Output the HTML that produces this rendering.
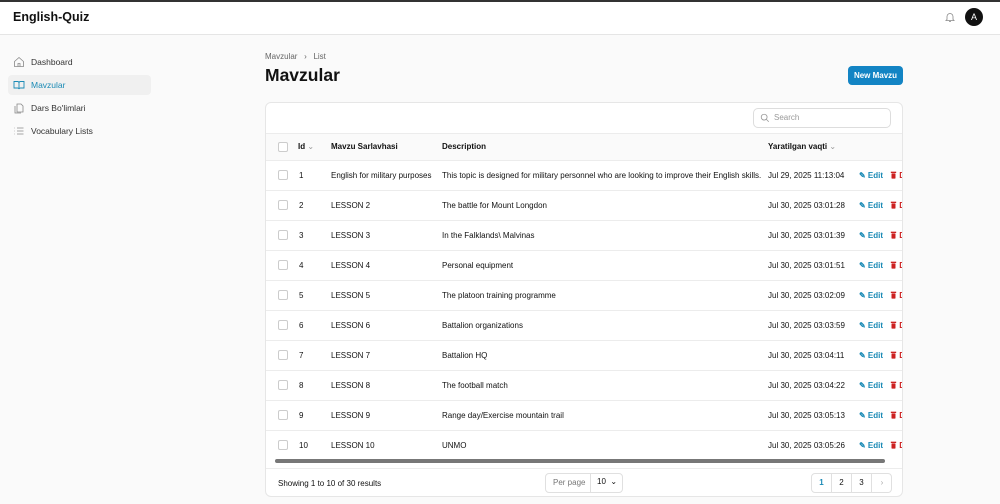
<!DOCTYPE html>
<html><head><meta charset="utf-8"><style>
*{box-sizing:border-box;margin:0;padding:0}
body{width:1000px;height:504px;overflow:hidden;font-family:"Liberation Sans",sans-serif;background:#fafafa;color:#111;position:relative}
.topline{position:absolute;left:0;top:0;width:1000px;height:2px;background:#333;z-index:5}
.hdr{position:absolute;top:0;left:0;right:0;height:35px;background:#fff;border-bottom:1px solid #e5e5e5}
.logo{position:absolute;left:13px;top:10px;font-weight:bold;font-size:12.5px}
.bell{position:absolute;left:944px;top:10px}
.av{position:absolute;left:965px;top:8px;width:18px;height:18px;border-radius:50%;background:#111;color:#fff;font-size:9px;text-align:center;line-height:18px}
.nav{position:absolute;left:8px;width:143px;height:20px;font-size:8.5px;color:#333;line-height:20px;padding-left:23px}
.nav svg{position:absolute;left:5px;top:4px}
.nav.act{background:#f0f0f0;border-radius:4px;color:#1a8ab5}
.bc{position:absolute;left:265px;top:52px;font-size:8px;color:#666}
h1{position:absolute;left:265px;top:65px;font-size:17.5px;font-weight:bold}
.btn{position:absolute;left:848px;top:66px;width:55px;height:19px;background:#1384c4;color:#fff;border-radius:4px;font-size:8px;font-weight:bold;text-align:center;line-height:19px}
.card{position:absolute;left:265px;top:102px;width:638px;height:395px;background:#fff;border:1px solid #e6e6e6;border-radius:6px;overflow:hidden}
.search{position:absolute;left:487px;top:5px;width:138px;height:20px;border:1px solid #ddd;border-radius:5px;font-size:8px;color:#999;line-height:18px;padding-left:20px}
.search svg{position:absolute;left:6px;top:4px}
.row{position:absolute;left:0;width:638px;height:30px;border-top:1px solid #ececec;font-size:8px;line-height:29px}
.row span{position:absolute;top:0;white-space:nowrap}
.th{background:#fafafa;height:27px;line-height:26px;font-weight:bold}
.cb{position:absolute;left:12px;top:9px;width:10px;height:10px;border:1px solid #ccc;border-radius:2px;background:#fff}
.th .cb{top:8px}
.ed{color:#1a8ab5;font-weight:bold}
.dl{color:#c22;font-weight:bold}
.dl svg{vertical-align:-1px}
.sb{position:absolute;left:9px;top:356px;width:610px;height:4px;background:#777;border-radius:2px}
.foot{position:absolute;left:0;top:365px;width:638px;height:30px;border-top:1px solid #ececec;font-size:8px}
.pp{position:absolute;left:279px;top:4px;width:78px;height:20px;border:1px solid #e0e0e0;border-radius:4px;line-height:18px;color:#777}
.pg{position:absolute;left:545px;top:4px;width:81px;height:20px;border:1px solid #e0e0e0;border-radius:4px;line-height:18px}
.pg span{position:absolute;top:0;width:20px;text-align:center;border-right:1px solid #e0e0e0}
</style></head><body>
<div class="topline"></div>
<div class="hdr"><div class="logo">English-Quiz</div>
<svg class="bell" width="12" height="14" viewBox="0 0 24 24" fill="none" stroke="#888" stroke-width="1.6"><path d="M6 17V11a6 6 0 0112 0v6l2 2H4zM10 21h4"/></svg>
<div class="av">A</div></div>
<div class="nav" style="top:52px"><svg width="12" height="12" viewBox="0 0 24 24" fill="none" stroke="#888" stroke-width="1.6"><path d="M3 11l9-8 9 8v10H3zM10 21v-6h4v6"/></svg>Dashboard</div>
<div class="nav act" style="top:75px"><svg width="12" height="12" viewBox="0 0 24 24" fill="none" stroke="#1a8ab5" stroke-width="1.8"><path d="M2 5h7a3 3 0 013 3v12a3 3 0 00-3-2H2zM22 5h-7a3 3 0 00-3 3v12a3 3 0 013-2h7z"/></svg>Mavzular</div>
<div class="nav" style="top:98px"><svg width="12" height="12" viewBox="0 0 24 24" fill="none" stroke="#888" stroke-width="1.6"><path d="M8 4h8l4 4v12H8zM4 8v14h12"/></svg>Dars Bo'limlari</div>
<div class="nav" style="top:121px"><svg width="12" height="12" viewBox="0 0 24 24" fill="none" stroke="#888" stroke-width="1.6"><path d="M8 6h13M8 12h13M8 18h13M3 6h1M3 12h1M3 18h1"/></svg>Vocabulary Lists</div>
<div class="bc">Mavzular &nbsp;&nbsp;›&nbsp;&nbsp; List</div>
<h1>Mavzular</h1>
<div class="btn">New Mavzu</div>
<div class="card">
<div class="search"><svg width="10" height="10" viewBox="0 0 24 24" fill="none" stroke="#999" stroke-width="2"><circle cx="10" cy="10" r="7"/><path d="M15 15l6 6"/></svg>Search</div>
<div class="row th" style="top:30px"><div class="cb"></div><span style="left:32px">Id <span style="position:static;color:#999;font-weight:normal">⌄</span></span><span style="left:65px">Mavzu Sarlavhasi</span><span style="left:176px">Description</span><span style="left:502px">Yaratilgan vaqti <span style="position:static;color:#999;font-weight:normal">⌄</span></span></div>
<div id="rows"></div>
<div class="sb"></div>
<div class="foot"><span style="position:absolute;left:12px;top:10px">Showing 1 to 10 of 30 results</span>
<div class="pp"><span style="position:absolute;left:7px">Per page</span><span style="position:absolute;left:44px;top:-1px;height:20px;border-left:1px solid #e0e0e0;padding-left:6px;color:#111">10 &nbsp;⌄</span></div>
<div class="pg"><span style="left:0;color:#1a8ab5;font-weight:bold">1</span><span style="left:20px">2</span><span style="left:40px">3</span><span style="left:60px;border:none;color:#aaa">›</span></div>
</div>
</div>
<script>
var d=[["1","English for military purposes","This topic is designed for military personnel who are looking to improve their English skills.","Jul 29, 2025 11:13:04"],["2","LESSON 2","The battle for Mount Longdon","Jul 30, 2025 03:01:28"],["3","LESSON 3","In the Falklands\\ Malvinas","Jul 30, 2025 03:01:39"],["4","LESSON 4","Personal equipment","Jul 30, 2025 03:01:51"],["5","LESSON 5","The platoon training programme","Jul 30, 2025 03:02:09"],["6","LESSON 6","Battalion organizations","Jul 30, 2025 03:03:59"],["7","LESSON 7","Battalion HQ","Jul 30, 2025 03:04:11"],["8","LESSON 8","The football match","Jul 30, 2025 03:04:22"],["9","LESSON 9","Range day/Exercise mountain trail","Jul 30, 2025 03:05:13"],["10","LESSON 10","UNMO","Jul 30, 2025 03:05:26"]];
var tr='<svg width="7" height="8" viewBox="0 0 10 12"><rect x="1" y="1" width="8" height="2" fill="#c22"/><rect x="2" y="3.5" width="6" height="8" rx="1" fill="#c22"/></svg>';
var h="";d.forEach(function(r,i){h+='<div class="row" style="top:'+(57+i*30)+'px"><div class="cb"></div><span style="left:33px">'+r[0]+'</span><span style="left:65px">'+r[1]+'</span><span style="left:176px">'+r[2]+'</span><span style="left:502px">'+r[3]+'</span><span class="ed" style="left:593px">✎ Edit</span><span class="dl" style="left:624px">'+tr+' D</span></div>';});
document.getElementById("rows").innerHTML=h;
</script>
</body></html>
